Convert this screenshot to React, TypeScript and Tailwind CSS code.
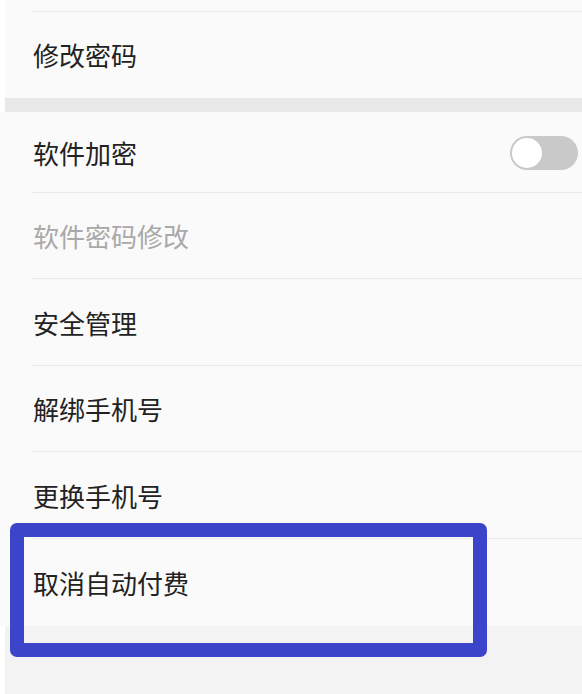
import React from "react";

const font = { fontFamily: '"Noto Sans CJK SC", "Noto Sans", sans-serif' };

function Row({ label, h, muted, divider = true, children }: { label: string; h: string; muted?: boolean; divider?: boolean; children?: React.ReactNode }) {
  return (
    <div className={`relative flex items-center pl-[33px] pr-[4px] ${h}`}>
      <span className={`text-[26px] leading-none ${muted ? "text-[#a9a9a9]" : "text-[#222222]"}`}>{label}</span>
      <div className="flex-1" />
      {children}
      {divider && <div className="absolute bottom-0 left-[32px] right-0 h-px bg-[#e9e9e9]" />}
    </div>
  );
}

export default function App() {
  return (
    <div className="relative w-[582px] h-[694px] overflow-hidden bg-white" style={font}>
      <div className="ml-[5px] flex flex-col bg-[#fafafa]">
        <div className="relative h-[12px]">
          <div className="absolute bottom-0 left-[27px] right-0 h-px bg-[#e9e9e9]" />
        </div>
        <div className="flex items-center pl-[28px] h-[86px]">
          <span className="text-[26px] leading-none text-[#222222]">修改密码</span>
        </div>
        <div className="h-[14px] bg-[#e8e8e8]" />
      </div>
      <div className="flex flex-col bg-[#fafafa]">
        <Row label="软件加密" h="h-[81px]">
          <div className="flex h-[34px] w-[68px] items-center rounded-full bg-[#c9c9c9] p-[2px]">
            <div className="h-[30px] w-[30px] rounded-full bg-white" />
          </div>
        </Row>
        <Row label="软件密码修改" h="h-[86px]" muted />
        <Row label="安全管理" h="h-[87px]" />
        <Row label="解绑手机号" h="h-[86px]" />
        <Row label="更换手机号" h="h-[87px]" />
        <Row label="取消自动付费" h="h-[87px]" divider={false} />
      </div>
      <div className="ml-[5px] h-[80px] bg-[#f3f3f4]" />
      <div className="absolute left-[10px] top-[523px] h-[134px] w-[477px] rounded-[7px] border-[14px] border-[#3c44c9]" />
    </div>
  );
}
